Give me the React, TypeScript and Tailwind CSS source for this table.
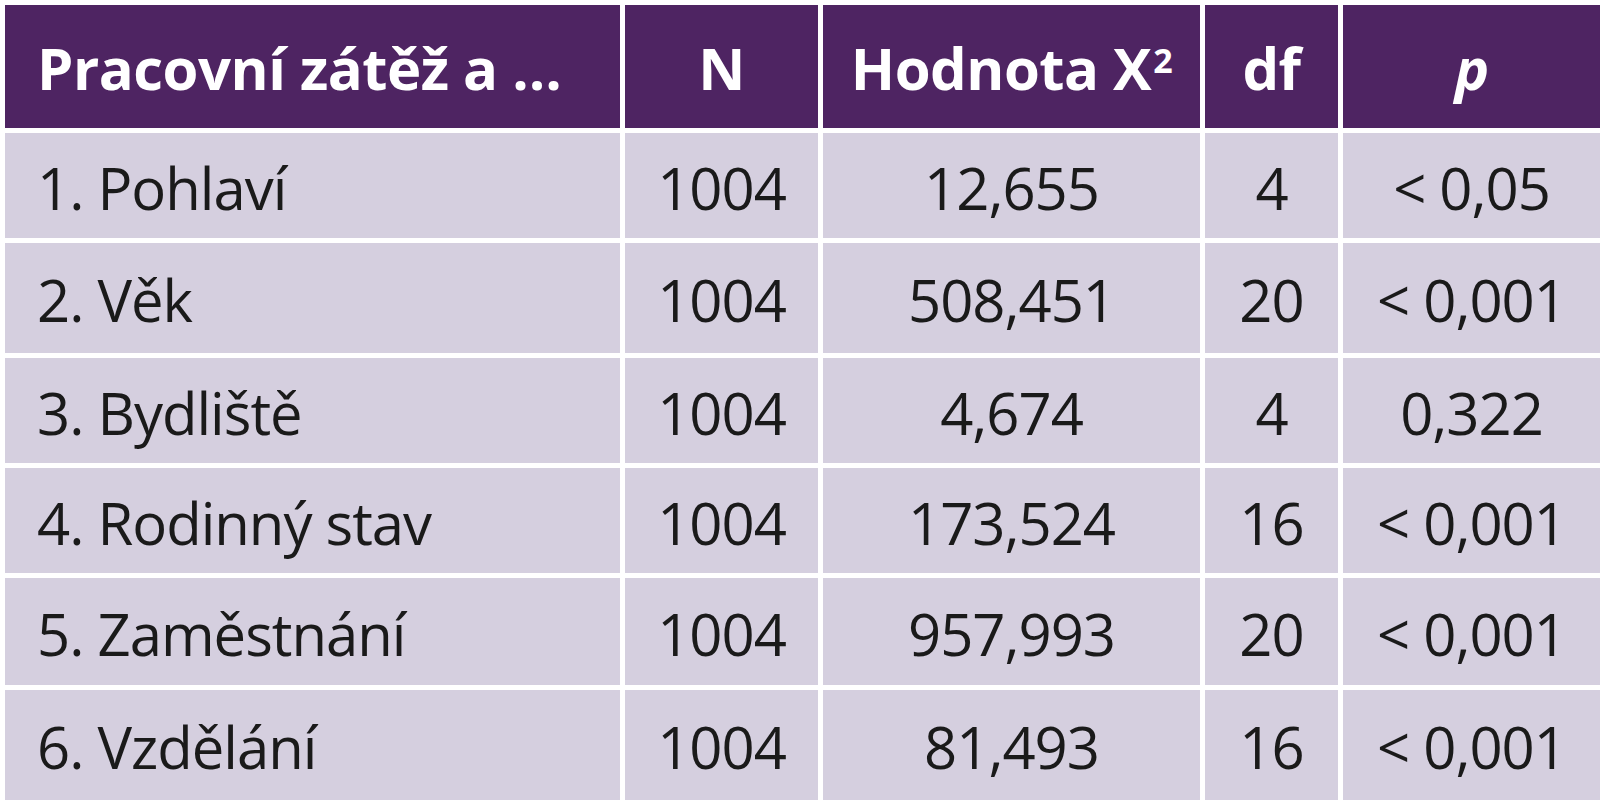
import React from "react";

const rows = [
  ["1. Pohlaví", "1004", "12,655", "4", "< 0,05"],
  ["2. Věk", "1004", "508,451", "20", "< 0,001"],
  ["3. Bydliště", "1004", "4,674", "4", "0,322"],
  ["4. Rodinný stav", "1004", "173,524", "16", "< 0,001"],
  ["5. Zaměstnání", "1004", "957,993", "20", "< 0,001"],
  ["6. Vzdělání", "1004", "81,493", "16", "< 0,001"],
];

export default function App() {
  return (
    <div className="w-[1614px] h-[800px] overflow-hidden bg-white pt-[5px] pl-[5px]" style={{ fontFamily: '"Open Sans", "Noto Sans", sans-serif' }}>
      <div className="grid grid-cols-[615px_193px_377px_133px_257px] grid-rows-[123px_105px_110px_105px_105px_107px_110px] gap-[5px] text-[58px] tracking-[-1px] leading-none">
        <div className="bg-[#4e2462] text-white font-bold tracking-[-0.5px] flex items-center pl-[32px] pt-[2px]">Pracovní zátěž a …</div>
        <div className="bg-[#4e2462] text-white font-bold tracking-[-0.5px] flex items-center justify-center pt-[2px]">N</div>
        <div className="bg-[#4e2462] text-white font-bold tracking-[-0.5px] flex items-center justify-center pt-[2px]">
          Hodnota X<span className="text-[34px] self-start mt-[36px] ml-[2px]">2</span>
        </div>
        <div className="bg-[#4e2462] text-white font-bold tracking-[-0.5px] flex items-center justify-center pt-[2px]">df</div>
        <div className="bg-[#4e2462] text-white font-bold italic flex items-center justify-center pt-[2px]">p</div>
        {rows.map((r, i) => (
          <React.Fragment key={i}>
            <div className="bg-[#d5cfdf] text-[#1a1a1a] flex items-center pl-[32px] pt-[4px]">{r[0]}</div>
            <div className="bg-[#d5cfdf] text-[#1a1a1a] flex items-center justify-center pt-[4px]">{r[1]}</div>
            <div className="bg-[#d5cfdf] text-[#1a1a1a] flex items-center justify-center pt-[4px]">{r[2]}</div>
            <div className="bg-[#d5cfdf] text-[#1a1a1a] flex items-center justify-center pt-[4px]">{r[3]}</div>
            <div className="bg-[#d5cfdf] text-[#1a1a1a] flex items-center justify-center pt-[4px]">{r[4]}</div>
          </React.Fragment>
        ))}
      </div>
    </div>
  );
}
